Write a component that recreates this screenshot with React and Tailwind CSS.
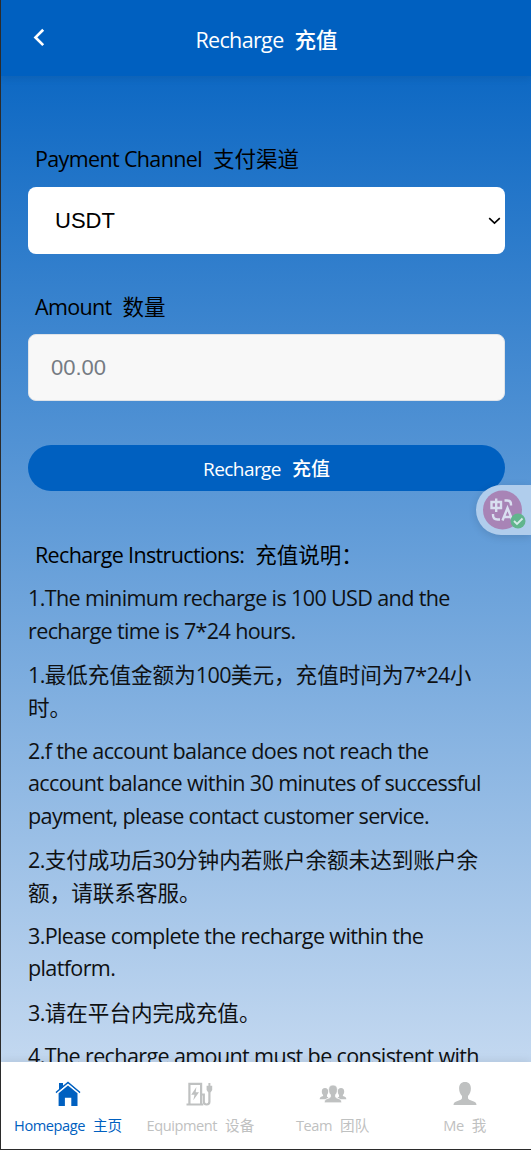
import React, { useState } from 'react';
import clsx from 'clsx';

const INSTRUCTIONS = [
    ['1.The minimum recharge is 100 USD and the', 'recharge time is 7*24 hours.'],
    ['1.最低充值金额为100美元，充值时间为7*24小', '时。'],
    ['2.f the account balance does not reach the', 'account balance within 30 minutes of successful', 'payment, please contact customer service.'],
    ['2.支付成功后30分钟内若账户余额未达到账户余', '额，请联系客服。'],
    ['3.Please complete the recharge within the', 'platform.'],
    ['3.请在平台内完成充值。'],
    ['4.The recharge amount must be consistent with'],
];

const HomeIcon = () => (
    <svg width="26" height="26" viewBox="0 0 26 26" fill="currentColor">
        <path d="M4 2h4v4L4 9.300z" />
        <path d="M13 4.400 22.500 12.300V25h-6.200v-8.300H9.900V25H3.600V12.300z" />
        <path d="M1 11.600 13 1.600l12 10" fill="none" stroke="currentColor" strokeWidth="1.500" />
        <path d="M2.200 12 13 3l10.800 9" fill="none" stroke="#fff" strokeWidth=".8" />
    </svg>
);

const EquipmentIcon = () => (
    <svg width="28" height="26" viewBox="0 0 28 26" fill="none" stroke="currentColor" strokeWidth="2.200">
        <path d="M3.400 23V2.900h11.700V23M.5 23.500h16.800" />
        <path d="M15.200 13.500h2.600v7.300q0 2.700 2.800 2.700t2.800-2.700V10" />
        <path d="M20.600 4.700h5.600v4.200l-1.500 2.300h-2.600l-1.500-2.300z" fill="currentColor" stroke="none" />
        <path d="M23.400 2v3" strokeWidth="2" />
        <path d="m10.400 6-5.200 7.700h3.300L7.300 19.200l5.700-8H9.700z" fill="currentColor" stroke="none" />
    </svg>
);

const TeamIcon = () => (
    <svg width="28" height="26" viewBox="0 0 28 26" fill="currentColor">
        <path d="M6 7c2.200 0 3.200 1.400 3.200 3.500 0 1.500-.5 2.700-1.200 3.600v1.600l1.500.7-2.300 1.800H.7c0-1.700.6-2.200 2-2.700l1.400-.5v-.9C3.200 13.200 2.800 12 2.800 10.500 2.800 8.400 3.800 7 6 7z" />
        <path d="M22 7c-2.200 0-3.200 1.400-3.200 3.500 0 1.500.5 2.700 1.200 3.600v1.600l-1.500.7 2.300 1.800h6.500c0-1.700-.6-2.200-2-2.700l-1.400-.5v-.9c.9-.9 1.300-2.100 1.300-3.600C25.200 8.400 24.200 7 22 7z" />
        <path d="M14 4c3 0 4.400 1.900 4.400 4.700 0 2.100-.8 4-1.900 5.100v2c.2.900 1.400 1.200 3.400 1.900 2 .6 2.700 1.600 2.700 4.100H5.400c0-2.500.7-3.500 2.700-4.100 2-.7 3.200-1 3.400-1.900v-2c-1.100-1.100-1.900-3-1.900-5.100C9.600 5.900 11 4 14 4z" stroke="#fff" strokeWidth=".7" />
    </svg>
);

const MeIcon = () => (
    <svg width="26" height="26" viewBox="0 0 26 26" fill="currentColor">
        <path d="M13 1c4 0 5.900 2.600 5.900 6.500 0 3.200-1.200 5.800-2.900 7.400v2.300c.2 1.300 1.700 1.800 4.400 2.700 3 1 4.100 1.900 4.100 4.100h-23c0-2.200 1.100-3.100 4.100-4.100 2.700-.9 4.200-1.400 4.400-2.700v-2.300c-1.700-1.600-2.900-4.200-2.900-7.400C7.100 3.600 9 1 13 1z" />
    </svg>
);

const TABS = [
    { label: 'Homepage', zh: '主页', Icon: HomeIcon, active: true },
    { label: 'Equipment', zh: '设备', Icon: EquipmentIcon },
    { label: 'Team', zh: '团队', Icon: TeamIcon },
    { label: 'Me', zh: '我', Icon: MeIcon },
];

// Latin text is set a little tighter than the Chinese next to it
const Mixed = ({ text }) =>
    text.split(/([\u3000-\uffef]+)/).filter(Boolean).map((part, i) =>
        /[\u3000-\uffef]/.test(part)
            ? <span key={i} className="font-['Noto_Sans_CJK_SC',sans-serif] tracking-normal">{part}</span>
            : <span key={i} className="font-normal tracking-[-0.03em]">{part}</span>
    );

const Bilingual = ({ en, zh, gap = 'gap-[11px]' }) => (
    <span className={clsx('flex items-baseline whitespace-nowrap', gap)}>
        <span><Mixed text={en} /></span>
        <span><Mixed text={zh} /></span>
    </span>
);

const Header = () => (
    <header className="relative z-10 flex h-[76px] shrink-0 items-center justify-center bg-[#0060c0] text-[21.5px] font-medium text-white shadow-[0_2px_8px_rgba(0,0,0,0.08)]">
        <button className="absolute left-8 top-[28px]" aria-label="Back">
            <svg width="12" height="19" viewBox="0 0 12 19" fill="none" stroke="currentColor" strokeWidth="2.700">
                <path d="M10.200 1.700 2.500 9.400l7.700 7.700" />
            </svg>
        </button>
        <div className="pl-px pt-[3px]">
            <Bilingual en="Recharge" zh="充值" />
        </div>
    </header>
);

const TranslateBubble = () => (
    <div className="absolute right-0 top-[485px] z-20 flex h-[50px] w-[55px] items-center rounded-l-full bg-[#b0cdec] pl-[7px] shadow-[0_2px_8px_rgba(0,0,0,0.12)]">
        <svg width="44" height="40" viewBox="0 0 44 40" fill="none">
            <circle cx="19.500" cy="20" r="19.500" fill="#a884b6" />
            <g stroke="#d9dff0" strokeWidth="2.400">
                <path d="M8.500 12h9.500v6H8.500zM13.200 8.500v13.500" />
                <path d="M21.500 10.500h2.500q4 0 4 4v1" />
                <path d="M10 24v1q0 4.500 4.500 4.500h2.500" />
                <path d="m19.500 30.500 5-12.500 5 12.500M21.300 27h6.400" />
            </g>
            <circle cx="35" cy="31" r="7.500" fill="#61b58d" />
            <path d="m31 31 3 3 5.500-5.500" stroke="#d5ebe8" strokeWidth="1.800" />
        </svg>
    </div>
);

const TabBar = () => (
    <nav className="relative z-10 grid h-[87px] shrink-0 grid-cols-4 bg-white pl-px shadow-[0_-2px_8px_rgba(0,0,0,0.08)]">
        {TABS.map(({ label, zh, Icon, active }) => (
            <button
                key={label}
                className={clsx('flex flex-col items-center pt-[19px] text-[14.600px]', active ? 'text-[#0060c0]' : 'text-[#bfc1c1]')}
            >
                <Icon />
                <span className="mt-1.5 leading-6">
                    <Bilingual en={label} zh={zh} gap="gap-2" />
                </span>
            </button>
        ))}
    </nav>
);

const App = () => {
    const [amount, setAmount] = useState('');

    return (
        <div className="relative flex h-[1150px] w-[531px] flex-col overflow-hidden border-b border-l border-[#2b2b2b] bg-[linear-gradient(180deg,#0060c0,#d3e2f4)] font-['Open_Sans','Noto_Sans_CJK_SC',sans-serif] text-[21.5px] text-black">
            <Header />

            <main className="min-h-0 flex-1 overflow-hidden pl-[27px] pr-[26px] pt-[66px]">
                <div className="pl-[7px] leading-8">
                    <Bilingual en="Payment Channel" zh="支付渠道" />
                </div>
                <div className="mt-[11.500px] flex h-[67.500px] items-center justify-between rounded-lg bg-white pl-[27px] pr-1 font-['Liberation_Sans',sans-serif] text-[22px]">
                    <span>USDT</span>
                    <svg className="mt-px" width="13" height="8" viewBox="0 0 13 8" fill="none" stroke="currentColor" strokeWidth="1.600">
                        <path d="m1.200 1.200 5.300 5 5.300-5" />
                    </svg>
                </div>

                <div className="mt-9 pl-[7px] leading-8">
                    <Bilingual en="Amount" zh="数量" />
                </div>
                <input
                    value={amount}
                    onChange={(e) => setAmount(e.target.value)}
                    placeholder="00.00"
                    className="mt-[11px] block h-[67px] w-full rounded-lg border border-[#dfe3e8] bg-[#f8f8f8] px-[22px] font-['Liberation_Sans',sans-serif] text-[22px] placeholder:text-[#757b83]"
                />

                <button className="mt-11 flex h-[46px] w-full items-center justify-center rounded-full bg-[#0060c0] pt-0.5 text-[19px] font-medium text-white">
                    <Bilingual en="Recharge" zh="充值" />
                </button>

                <div className="mt-[47px] pl-[7px] leading-8">
                    <Bilingual en="Recharge Instructions:" zh="充值说明：" />
                </div>
                <div className="mt-[11px] text-[21.580px] text-[#0f1113]">
                    {INSTRUCTIONS.map((lines) => (
                        <p key={lines[0]} className="mb-[10.900px] leading-[32.700px] whitespace-nowrap">
                            {lines.map((line) => (
                                <span key={line} className="block h-[32.700px]"><Mixed text={line} /></span>
                            ))}
                        </p>
                    ))}
                </div>
            </main>

            <TabBar />
            <TranslateBubble />
        </div>
    );
};

export default App;
